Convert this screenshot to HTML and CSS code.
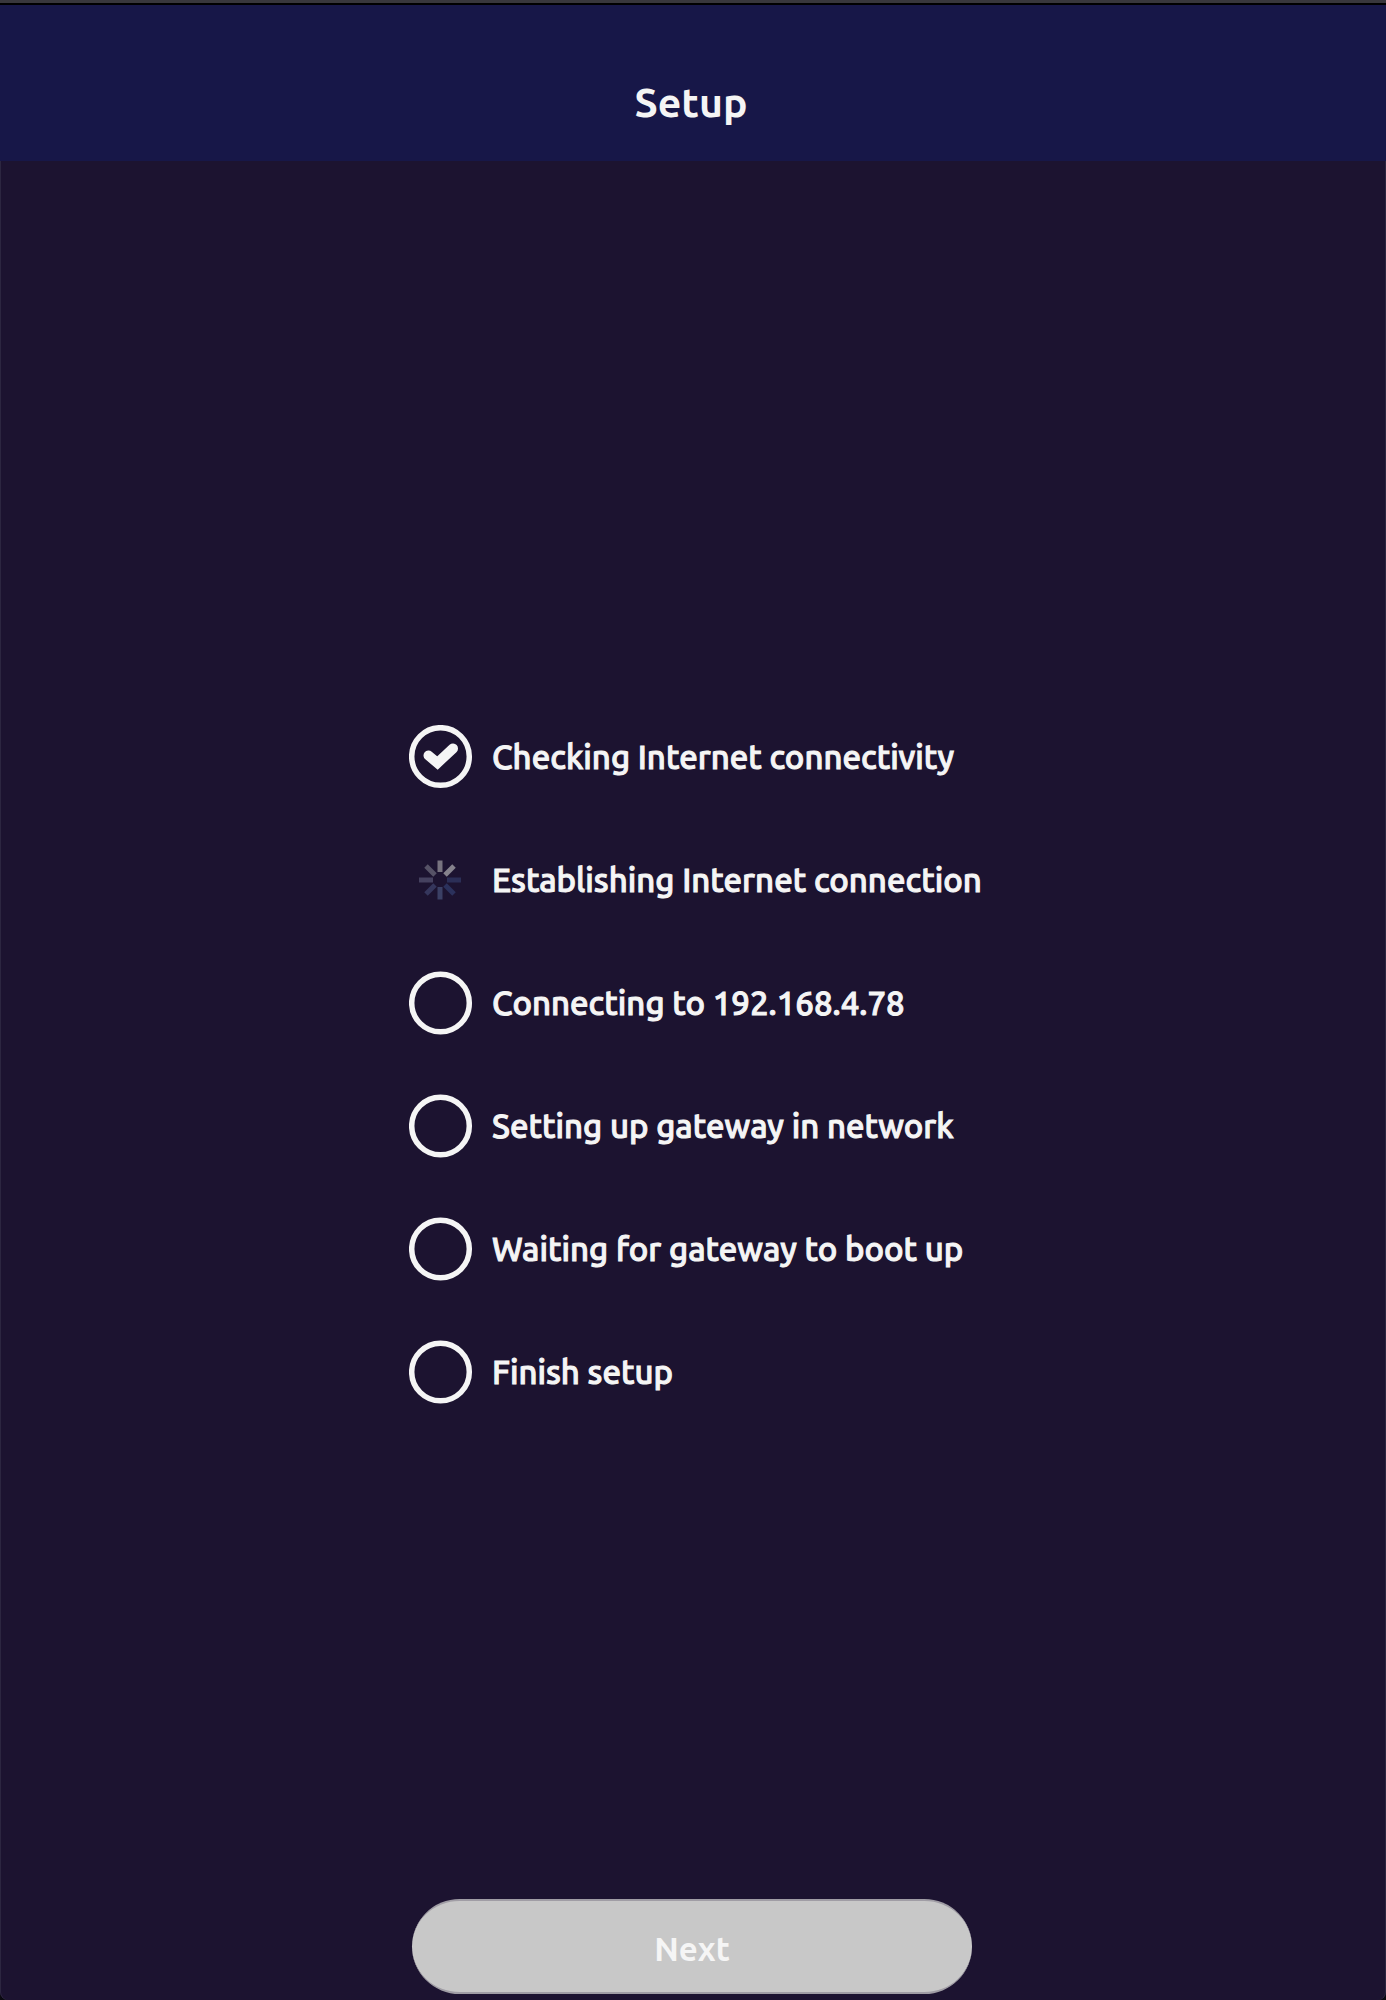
FILE: index.html
```html
<!DOCTYPE html>
<html lang="en">
<head>
<meta charset="utf-8">
<meta name="viewport" content="width=device-width, initial-scale=1">
<title>Setup</title>
<link rel="stylesheet" href="styles.css">
</head>
<body>
<div class="window">
  <header class="header"><h1 class="title">Setup</h1></header>
  <main class="content">
    <ol class="steps">
      <li class="step">
        <svg class="icon" viewBox="0 0 64 64" aria-hidden="true"><circle class="ring" cx="31.500" cy="31.500" r="28.8"/><path class="tick" d="M19.500 30.500L28.500 38L44 23.500"/></svg>
        <span>Checking Internet connectivity</span>
      </li>
      <li class="step">
        <svg class="icon spinner" viewBox="0 0 64 64" aria-hidden="true">
          <path stroke="#77737f" d="M31 24V12.500"/>
          <path stroke="#85828c" d="M36 27L45 18"/>
          <path stroke="#2b2e56" d="M38 32H52"/>
          <path stroke="#2b315c" d="M36 37L45 46"/>
          <path stroke="#3b4065" d="M31 39V51.500"/>
          <path stroke="#35365c" d="M26 37L17 46"/>
          <path stroke="#45415f" d="M24 32H10"/>
          <path stroke="#565266" d="M26 27L17 18"/>
        </svg>
        <span>Establishing Internet connection</span>
      </li>
      <li class="step">
        <svg class="icon" viewBox="0 0 64 64" aria-hidden="true"><circle class="ring" cx="31.500" cy="32" r="28.8"/></svg>
        <span>Connecting to 192.168.4.78</span>
      </li>
      <li class="step">
        <svg class="icon" viewBox="0 0 64 64" aria-hidden="true"><circle class="ring" cx="31.500" cy="32" r="28.8"/></svg>
        <span>Setting up gateway in network</span>
      </li>
      <li class="step">
        <svg class="icon" viewBox="0 0 64 64" aria-hidden="true"><circle class="ring" cx="31.500" cy="32" r="28.8"/></svg>
        <span>Waiting for gateway to boot up</span>
      </li>
      <li class="step">
        <svg class="icon" viewBox="0 0 64 64" aria-hidden="true"><circle class="ring" cx="31.500" cy="32" r="28.8"/></svg>
        <span>Finish setup</span>
      </li>
    </ol>
  </main>
  <footer class="footer"><button class="next" type="button">Next</button></footer>
</div>
</body>
</html>
```
FILE: styles.css
```css
* {
  box-sizing: border-box;
}

body {
  margin: 0;
  background: #0b0a10;
  color: #f5f5f5;
  font-family: Ubuntu, "Noto Sans", "Open Sans", sans-serif;
  font-weight: 500;
}

.window {
  display: flex;
  flex-direction: column;
  min-height: 100vh;
  border-top: 3px solid #38373c;
  border-radius: 0 0 8px 8px;
  background: #1c1330;
  box-shadow: inset 1px 0 #2c2640, inset -1px 0 #2c2640;
}

.header {
  display: flex;
  justify-content: center;
  padding: 71px 20px 33px 16px;
  border-top: 2px solid #000;
  background: #171748;
}

.title {
  margin: 0;
  font-size: 41px;
  font-weight: 600;
  line-height: 52px;
}

.content {
  display: flex;
  flex: 1;
  align-items: center;
  justify-content: center;
  padding: 69px 16px 0;
}

.steps {
  display: flex;
  flex-direction: column;
  gap: 59px;
  width: 568px;
  max-width: 100%;
  margin: 0;
  padding: 0;
  list-style: none;
}

.step {
  display: flex;
  align-items: center;
  gap: 19px;
  font-size: 33px;
  line-height: 44px;
  white-space: nowrap;
  -webkit-text-stroke: 1px #f5f5f5;
}

.icon {
  flex: none;
  width: 64px;
  height: 64px;
  fill: none;
}

.ring {
  stroke: #f5f5f5;
  stroke-width: 5.5;
}

.tick {
  stroke: #f5f5f5;
  stroke-width: 10;
  stroke-linecap: round;
}

.spinner {
  stroke-width: 5;
}

.footer {
  display: flex;
  justify-content: center;
  padding: 0 18px 6px 16px;
}

.next {
  width: 560px;
  max-width: 100%;
  padding: 26px 16px 21px;
  border: 2px solid #a09da5;
  border-width: 2px 0;
  border-radius: 48px;
  background: #c8c8c8;
  color: #f5f5f5;
  font: inherit;
  font-size: 33px;
  font-weight: 600;
  line-height: 44px;
}

@media (max-width: 600px) {
  .step {
    white-space: normal;
  }
}
```
